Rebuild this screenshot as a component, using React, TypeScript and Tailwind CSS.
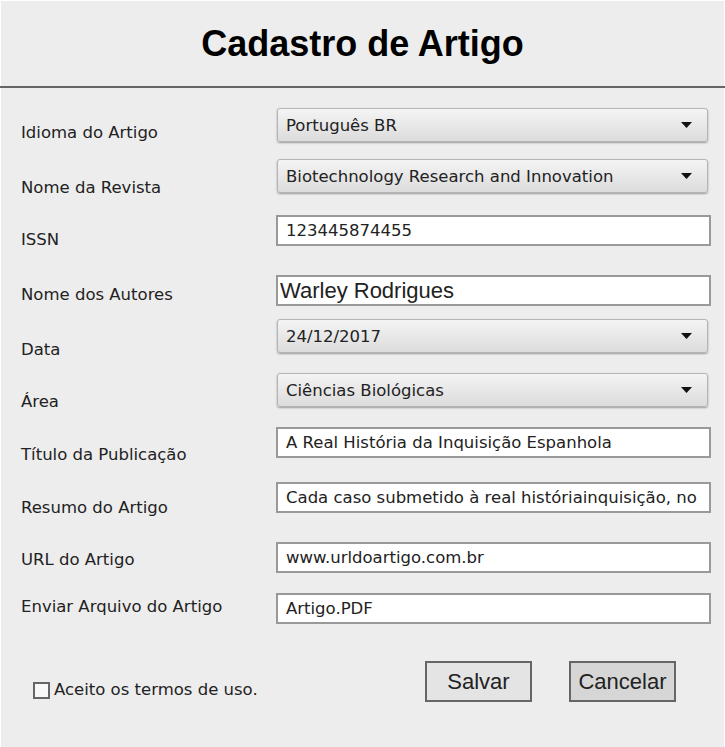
import React from "react";

const comic = "font-['DejaVu_Sans',sans-serif]";

type Row = {
  label: string;
  kind: "select" | "input" | "big";
  value: string;
  h: number;
  lt: number;
};

const rows: Row[] = [
  { label: "Idioma do Artigo", kind: "select", value: "Português BR", h: 51, lt: 15 },
  { label: "Nome da Revista", kind: "select", value: "Biotechnology Research and Innovation", h: 56, lt: 19 },
  { label: "ISSN", kind: "input", value: "123445874455", h: 60, lt: 15 },
  { label: "Nome dos Autores", kind: "big", value: "Warley Rodrigues", h: 44, lt: 10 },
  { label: "Data", kind: "select", value: "24/12/2017", h: 54, lt: 21 },
  { label: "Área", kind: "select", value: "Ciências Biológicas", h: 54, lt: 19 },
  { label: "Título da Publicação", kind: "input", value: "A Real História da Inquisição Espanhola", h: 55, lt: 18 },
  { label: "Resumo do Artigo", kind: "input", value: "Cada caso submetido à real históriainquisição, no", h: 60, lt: 16 },
  { label: "URL do Artigo", kind: "input", value: "www.urldoartigo.com.br", h: 51, lt: 8 },
  { label: "Enviar Arquivo do Artigo", kind: "input", value: "Artigo.PDF", h: 38, lt: 4 },
];

function Field({ r }: { r: Row }) {
  if (r.kind === "select") {
    return (
      <div className="ml-px flex h-[34px] w-[431px] items-center justify-between rounded-[3px] border border-[#b5b5b5] bg-gradient-to-b from-[#f4f4f4] to-[#dcdcdc] pl-[8px] pr-[15px] shadow-[0_1px_2px_rgba(0,0,0,0.35)]">
        <span className={`${comic} pt-[2px] text-[16.5px] text-[#222]`}>{r.value}</span>
        <svg width="11" height="6" viewBox="0 0 11 6">
          <path d="M0 0 H11 L5.5 6 Z" fill="#111" />
        </svg>
      </div>
    );
  }
  if (r.kind === "big") {
    return (
      <div className="flex h-[31px] w-[435px] items-center border-2 border-[#999] bg-white pl-[2px]">
        <span className="font-['Liberation_Sans',Arial,sans-serif] text-[22px] leading-none text-[#222]">{r.value}</span>
      </div>
    );
  }
  return (
    <div className="flex h-[31px] w-[435px] items-center border-2 border-[#999] bg-white pl-[8px]">
      <span className={`${comic} pt-[2px] text-[16.5px] text-[#222]`}>{r.value}</span>
    </div>
  );
}

export default function App() {
  return (
    <div className="min-h-screen w-full border-x border-t border-white bg-[#ededed]">
      <div className="flex h-[85px] items-center justify-center">
        <h1 className="font-['Liberation_Sans',Arial,sans-serif] text-[36px] font-bold leading-none text-black">
          Cadastro de Artigo
        </h1>
      </div>
      <div className="-mx-px h-[2px] bg-[#666]" />
      <div className="pt-[20px]">
        {rows.map((r) => (
          <div key={r.label} className="flex items-start" style={{ height: r.h }}>
            <div
              className={`${comic} w-[275px] shrink-0 pl-[20px] text-[16.5px] leading-[20px] text-[#222]`}
              style={{ marginTop: r.lt }}
            >
              {r.label}
            </div>
            <Field r={r} />
          </div>
        ))}
        <div className="mt-[30px] flex h-[40px] items-start">
          <div className="mt-[19px] flex items-center pl-[32px]">
            <div className="h-[17px] w-[17px] border-2 border-[#666] bg-[#f8f8f8]" />
            <span className={`${comic} ml-[4px] text-[16.5px] leading-[20px] text-[#222]`}>
              Aceito os termos de uso.
            </span>
          </div>
          <div className="ml-auto mr-[48px] flex gap-[37px]">
            <button className="flex h-[41px] w-[107px] items-center justify-center border-2 border-[#666] bg-[#e4e4e4] font-['Liberation_Sans',Arial,sans-serif] text-[22px] text-[#222]">
              Salvar
            </button>
            <button className="flex h-[41px] w-[107px] items-center justify-center border-2 border-[#666] bg-[#d6d6d6] font-['Liberation_Sans',Arial,sans-serif] text-[22px] text-[#222]">
              Cancelar
            </button>
          </div>
        </div>
      </div>
    </div>
  );
}
